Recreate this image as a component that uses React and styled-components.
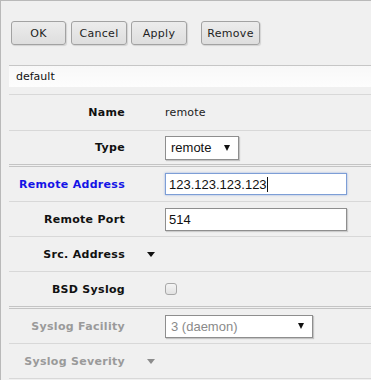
import React from "react";
import styled, { createGlobalStyle } from "styled-components";

const Global = createGlobalStyle`
  html, body {
    margin: 0;
    padding: 0;
    background: #f0f0f0;
  }
`;

const Window = styled.div`
  width: 370px;
  height: 379px;
  border-top: 1px solid #b9b9b9;
  border-left: 1px solid #b9b9b9;
  background: #f0f0f0;
  overflow: hidden;
  font-family: "DejaVu Sans", Verdana, sans-serif;
`;

const Toolbar = styled.div`
  display: flex;
  padding: 20px 0 0 10px;
`;

const Button = styled.button`
  width: ${(p) => p.w}px;
  height: 24px;
  margin-left: ${(p) => p.gap || 0}px;
  padding: 0;
  border: 1px solid #a2a2a2;
  border-radius: 3px;
  background: linear-gradient(#ececec, #dedede);
  box-shadow: 1px 1px 1px rgba(0, 0, 0, 0.12);
  font-family: "DejaVu Sans", Verdana, sans-serif;
  font-size: 11px;
  letter-spacing: 0.3px;
  color: #1e1e1e;
`;

const DefaultBar = styled.div`
  margin: 20px 0 0 8px;
  height: 21px;
  border-top: 1px solid #c6c6c6;
  background: linear-gradient(#f8f8f8, #fdfdfd);
  padding-left: 7px;
  font-size: 11px;
  line-height: 21px;
  color: #111;
`;

const Form = styled.div`
  margin: 7px 0 0 8px;
  border-top: 1px solid #d8d8d8;
`;

const Row = styled.div`
  display: grid;
  grid-template-columns: 116px 40px 1fr;
  align-items: center;
  height: ${(p) => p.h || 34}px;
  border-bottom: ${(p) => (p.end ? "3px double #c4c4c4" : "1px solid #d8d8d8")};
`;

const Label = styled.div`
  text-align: right;
  font-weight: bold;
  font-size: 11px;
  letter-spacing: 0.3px;
  color: ${(p) => (p.tone === "blue" ? "#1414e6" : p.tone === "gray" ? "#9a9a9a" : "#111")};
`;

const Toggle = styled.div`
  display: flex;
  padding-left: 22px;
`;

const Caret = styled.span`
  width: 0;
  height: 0;
  border-left: 4.5px solid transparent;
  border-right: 4.5px solid transparent;
  border-top: 5px solid ${(p) => (p.gray ? "#8c8c8c" : "#111")};
`;

const Value = styled.div`
  display: flex;
  align-items: center;
`;

const Plain = styled.span`
  font-size: 11px;
  letter-spacing: 0.2px;
  color: #222;
`;

const Select = styled.div`
  box-sizing: border-box;
  width: ${(p) => p.w}px;
  height: ${(p) => p.h || 23}px;
  display: flex;
  align-items: center;
  justify-content: space-between;
  padding: 0 8px 0 5px;
  background: #fff;
  border: 1px solid #8e8e8e;
  box-shadow: 1px 1px 1px rgba(0, 0, 0, 0.18);
  font-family: "Liberation Sans", Arial, sans-serif;
  font-size: 13px;
  color: ${(p) => (p.dim ? "#8a8a8a" : "#111")};
`;

const Arrow = styled.span`
  width: 0;
  height: 0;
  border-left: 3px solid transparent;
  border-right: 3px solid transparent;
  border-top: 6px solid #111;
`;

const Input = styled.div`
  box-sizing: border-box;
  width: 182px;
  height: ${(p) => p.h || 22}px;
  display: flex;
  align-items: center;
  padding-left: 3px;
  background: #fff;
  border: 1px solid ${(p) => (p.focus ? "#7d9ed6" : "#8e8e8e")};
  box-shadow: ${(p) => (p.focus ? "0 0 2px rgba(90, 130, 210, 0.6)" : "1px 1px 1px rgba(0,0,0,0.15)")};
  font-family: "Liberation Sans", Arial, sans-serif;
  font-size: 13px;
  color: #111;
`;

const Cursor = styled.span`
  width: 1px;
  height: 15px;
  background: #111;
`;

const Check = styled.span`
  box-sizing: border-box;
  width: 12px;
  height: 12px;
  border: 1px solid #a8a8a8;
  border-radius: 3px;
  background: linear-gradient(#f4f4f4, #e2e2e2);
`;

export default function App() {
  return (
    <>
      <Global />
      <Window>
        <Toolbar>
          <Button w={55}>OK</Button>
          <Button w={56} gap={5}>Cancel</Button>
          <Button w={56} gap={4}>Apply</Button>
          <Button w={59} gap={14}>Remove</Button>
        </Toolbar>
        <DefaultBar>default</DefaultBar>
        <Form>
          <Row h={35}>
            <Label>Name</Label>
            <Toggle />
            <Value>
              <Plain>remote</Plain>
            </Value>
          </Row>
          <Row h={33} end>
            <Label>Type</Label>
            <Toggle />
            <Value>
              <Select w={74} h={24}>
                remote
                <Arrow />
              </Select>
            </Value>
          </Row>
          <Row>
            <Label tone="blue">Remote Address</Label>
            <Toggle />
            <Value>
              <Input focus>
                123.123.123.123
                <Cursor />
              </Input>
            </Value>
          </Row>
          <Row>
            <Label>Remote Port</Label>
            <Toggle />
            <Value>
              <Input h={23}>514</Input>
            </Value>
          </Row>
          <Row>
            <Label>Src. Address</Label>
            <Toggle>
              <Caret />
            </Toggle>
            <Value />
          </Row>
          <Row end>
            <Label>BSD Syslog</Label>
            <Toggle />
            <Value>
              <Check />
            </Value>
          </Row>
          <Row>
            <Label tone="gray">Syslog Facility</Label>
            <Toggle />
            <Value>
              <Select w={148} dim>
                3 (daemon)
                <Arrow />
              </Select>
            </Value>
          </Row>
          <Row>
            <Label tone="gray">Syslog Severity</Label>
            <Toggle>
              <Caret gray />
            </Toggle>
            <Value />
          </Row>
        </Form>
      </Window>
    </>
  );
}
